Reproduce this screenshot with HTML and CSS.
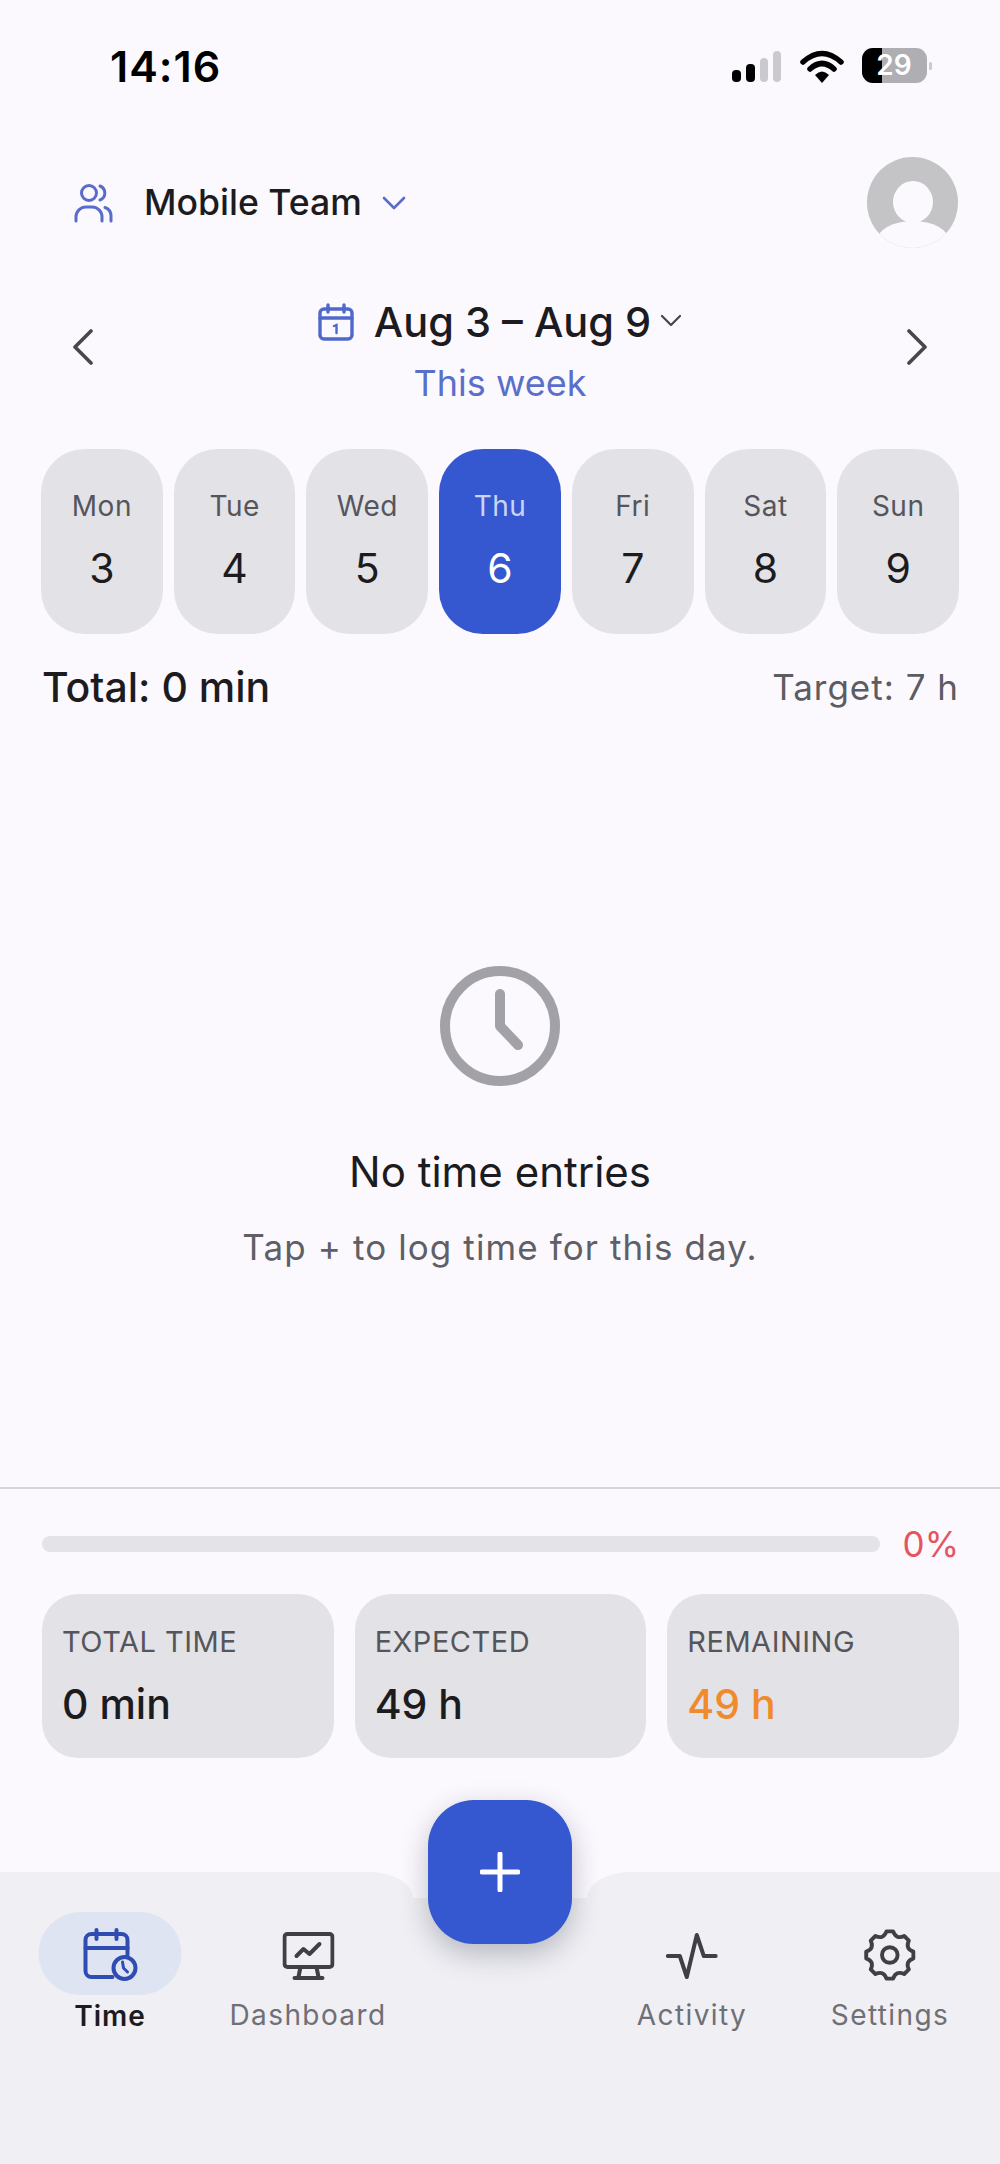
FILE: index.html
```html
<!DOCTYPE html>
<html lang="en">
<head>
    <meta charset="UTF-8">
    <meta name="viewport" content="width=device-width, initial-scale=1.0">
    <title>Time</title>
    <link rel="stylesheet" href="styles.css">
</head>
<body>
    <div class="page">
        <div class="status-bar">
            <span class="status-time">14:16</span>
            <svg class="status-icons" viewBox="0 0 200 36">
                <rect x="0" y="22" width="9" height="12" rx="4" fill="#000"/>
                <rect x="14" y="16" width="9" height="18" rx="4" fill="#000"/>
                <rect x="28" y="10" width="8" height="24" rx="4" fill="#c9c9ce"/>
                <rect x="41" y="3" width="8" height="31" rx="4" fill="#c9c9ce"/>
                <path d="M71 14 Q90 -3 109 14" fill="none" stroke="#000" stroke-width="5.5" stroke-linecap="round"/>
                <path d="M78 21 Q90 10 102 21" fill="none" stroke="#000" stroke-width="5.5" stroke-linecap="round"/>
                <path d="M83 27 Q90 20 97 27 L90 35 Z" fill="#000"/>
                <rect x="130" y="0" width="65" height="35" rx="11" fill="#aeaeb3"/>
                <path d="M141 0 H150 V35 H141 A11 11 0 0 1 130 24 V11 A11 11 0 0 1 141 0 Z" fill="#000"/>
                <rect x="197" y="14" width="3" height="8" rx="1.5" fill="#c9c9ce"/>
                <text x="162" y="27" class="battery-text">29</text>
            </svg>
        </div>

        <div class="team-row">
            <div class="team-select">
                <svg class="team-icon" viewBox="0 0 40 40" fill="none" stroke="#5a6ccb" stroke-width="3" stroke-linecap="round">
                    <circle cx="16" cy="10" r="7.5"/>
                    <path d="M27 3 A7.5 7.5 0 0 1 27 17"/>
                    <path d="M3 38 V34 A10 10 0 0 1 13 24 H19 A10 10 0 0 1 29 34 V38"/>
                    <path d="M32 24.500 A9 9 0 0 1 38 33 V38"/>
                </svg>
                <span class="team-name">Mobile Team</span>
                <svg class="team-chevron" viewBox="0 0 24 14" fill="none" stroke="#5a6ccb" stroke-width="2.600" stroke-linecap="round" stroke-linejoin="round">
                    <path d="M2 2 L12 12 L22 2"/>
                </svg>
            </div>
            <div class="avatar">
                <div class="avatar-head"></div>
                <div class="avatar-body"></div>
            </div>
        </div>

        <div class="date-row">
            <svg class="arrow" viewBox="0 0 22 36" fill="none" stroke="#46464c" stroke-width="3.600" stroke-linecap="round" stroke-linejoin="round">
                <path d="M19 2 L3 18 L19 34"/>
            </svg>
            <div class="date-center">
                <div class="date-line">
                    <svg class="date-icon" viewBox="0 0 36 38" fill="none" stroke="#5068cc" stroke-width="3.400" stroke-linecap="round">
                        <rect x="2" y="6" width="32" height="30" rx="4"/>
                        <path d="M2 15 H34"/>
                        <path d="M10 2 V9"/>
                        <path d="M26 2 V9"/>
                        <path d="M16 23 L18.500 22 V30" stroke-width="2.400"/>
                    </svg>
                    <span class="date-range">Aug 3 – Aug 9</span>
                    <svg class="date-chevron" viewBox="0 0 22 13" fill="none" stroke="#46464c" stroke-width="2.200" stroke-linecap="round" stroke-linejoin="round">
                        <path d="M2 2 L11 11 L20 2"/>
                    </svg>
                </div>
                <div class="date-sub">This week</div>
            </div>
            <svg class="arrow" viewBox="0 0 22 36" fill="none" stroke="#46464c" stroke-width="3.600" stroke-linecap="round" stroke-linejoin="round">
                <path d="M3 2 L19 18 L3 34"/>
            </svg>
        </div>

        <div class="week">
            <div class="day"><span class="day-name">Mon</span><span class="day-num">3</span></div>
            <div class="day"><span class="day-name">Tue</span><span class="day-num">4</span></div>
            <div class="day"><span class="day-name">Wed</span><span class="day-num">5</span></div>
            <div class="day active"><span class="day-name">Thu</span><span class="day-num">6</span></div>
            <div class="day"><span class="day-name">Fri</span><span class="day-num">7</span></div>
            <div class="day"><span class="day-name">Sat</span><span class="day-num">8</span></div>
            <div class="day"><span class="day-name">Sun</span><span class="day-num">9</span></div>
        </div>

        <div class="total-row">
            <span class="total">Total: 0 min</span>
            <span class="target">Target: 7 h</span>
        </div>

        <div class="empty">
            <svg class="empty-icon" viewBox="0 0 120 120" fill="none" stroke="#a2a1a7" stroke-width="10" stroke-linecap="round" stroke-linejoin="round">
                <circle cx="60" cy="60" r="55"/>
                <path d="M60 28 V60 L78 79"/>
            </svg>
            <div class="empty-title">No time entries</div>
            <div class="empty-sub">Tap + to log time for this day.</div>
        </div>

        <div class="summary">
            <div class="progress-row">
                <div class="progress"></div>
                <span class="progress-label">0%</span>
            </div>
            <div class="stats">
                <div class="stat">
                    <div class="stat-label">TOTAL TIME</div>
                    <div class="stat-value">0 min</div>
                </div>
                <div class="stat">
                    <div class="stat-label">EXPECTED</div>
                    <div class="stat-value">49 h</div>
                </div>
                <div class="stat">
                    <div class="stat-label">REMAINING</div>
                    <div class="stat-value orange">49 h</div>
                </div>
            </div>
        </div>

        <div class="nav">
            <div class="nav-side nav-left">
                <div class="nav-item nav-time">
                    <div class="nav-pill">
                        <svg class="nav-icon" viewBox="0 0 56 54" fill="none" stroke="#2f4cb2" stroke-width="4" stroke-linecap="round" stroke-linejoin="round">
                            <path d="M30 49 H9 A6 6 0 0 1 3 43 V12 A6 6 0 0 1 9 6 H39 A6 6 0 0 1 45 12 V27"/>
                            <path d="M3 20 H45"/>
                            <path d="M14 2 V11"/>
                            <path d="M34 2 V11"/>
                            <circle cx="42" cy="40" r="11"/>
                            <path d="M40 34 L41 40 L45 44" stroke-width="3"/>
                        </svg>
                    </div>
                    <span class="nav-label current">Time</span>
                </div>
                <div class="nav-item nav-dash">
                    <svg class="nav-icon" viewBox="0 0 52 48" fill="none" stroke="#3f3f45" stroke-width="4" stroke-linecap="round" stroke-linejoin="round">
                        <rect x="2" y="2" width="48" height="33" rx="3"/>
                        <path d="M14 24 L21 17 L27 22 L37 12"/>
                        <path d="M18 35 L16 45"/>
                        <path d="M34 35 L36 45"/>
                        <path d="M12 46 H40"/>
                    </svg>
                    <span class="nav-label">Dashboard</span>
                </div>
            </div>
            <div class="nav-gap"></div>
            <div class="nav-side nav-right">
                <div class="nav-item nav-activity">
                    <svg class="nav-icon" viewBox="0 0 52 48" fill="none" stroke="#3f3f45" stroke-width="4" stroke-linecap="round" stroke-linejoin="round">
                        <path d="M2 24 H14 L21 45 L31 3 L38 24 H50"/>
                    </svg>
                    <span class="nav-label">Activity</span>
                </div>
                <div class="nav-item nav-settings">
                    <svg class="nav-icon" viewBox="0 0 24 24" fill="none" stroke="#3f3f45" stroke-width="1.800" stroke-linejoin="round">
                        <path d="M10.470 1.110 H13.530 Q14.910 4.980 18.620 3.210 L20.790 5.380 Q19.020 9.090 22.890 10.470 V13.530 Q19.020 14.910 20.790 18.620 L18.620 20.790 Q14.910 19.020 13.530 22.890 H10.470 Q9.090 19.020 5.380 20.790 L3.210 18.620 Q4.980 14.910 1.110 13.530 V10.470 Q4.980 9.090 3.210 5.380 L5.380 3.210 Q9.090 4.980 10.470 1.110 Z"/>
                        <circle cx="12" cy="12" r="3.600"/>
                    </svg>
                    <span class="nav-label">Settings</span>
                </div>
            </div>
            <button class="fab">
                <svg class="fab-icon" viewBox="0 0 40 40" fill="none" stroke="#fff" stroke-width="5" stroke-linecap="round">
                    <path d="M20 2 V38"/>
                    <path d="M2 20 H38"/>
                </svg>
            </button>
        </div>
    </div>
</body>
</html>
```

FILE: styles.css
```css
* {
    box-sizing: border-box;
}

body {
    margin: 0;
    background-color: #fbf9fe;
    font-family: Inter, "Noto Sans", sans-serif;
    color: #1c1c20;
}

.page {
    display: flex;
    flex-direction: column;
    height: 2164px;
    overflow: hidden;
}

/* status bar */
.status-bar {
    display: flex;
    justify-content: space-between;
    align-items: flex-start;
    height: 86px;
    padding: 46px 68px 0 110px;
}

.status-time {
    font-size: 43px;
    line-height: 40px;
    font-weight: 600;
    letter-spacing: 1px;
    color: #000;
}

.status-icons {
    width: 200px;
    height: 36px;
    margin-top: 2px;
}

.battery-text {
    font-family: Inter, sans-serif;
    font-size: 28px;
    font-weight: 600;
    fill: #fff;
    text-anchor: middle;
}

/* team and avatar */
.team-row {
    display: flex;
    justify-content: space-between;
    align-items: center;
    margin-top: 71px;
    padding: 0 42px 0 73px;
}

.team-select {
    display: flex;
    align-items: center;
}

.team-icon {
    width: 40px;
    height: 40px;
}

.team-name {
    margin-left: 31px;
    font-size: 35.6px;
    font-weight: 500;
}

.team-chevron {
    width: 24px;
    height: 14px;
    margin-left: 20px;
}

.avatar {
    position: relative;
    width: 91px;
    height: 91px;
    border-radius: 50%;
    background-color: #c4c4c6;
    overflow: hidden;
}

.avatar-head {
    width: 40px;
    height: 42px;
    margin: 24px auto 0;
    border-radius: 50%;
    background-color: #fbf9fe;
}

.avatar-body {
    width: 72px;
    height: 40px;
    margin: -2px auto 0;
    border-radius: 50% 50% 0 0;
    background-color: #fbf9fe;
}

/* date picker */
.date-row {
    display: flex;
    justify-content: space-between;
    align-items: flex-start;
    margin-top: 48px;
    padding: 0 72px;
}

.arrow {
    width: 22px;
    height: 36px;
    margin-top: 33px;
}

.date-center {
    display: flex;
    flex-direction: column;
    align-items: center;
}

.date-line {
    display: flex;
    align-items: center;
    height: 52px;
}

.date-icon {
    width: 36px;
    height: 38px;
}

.date-range {
    margin-left: 20px;
    font-size: 41.5px;
    font-weight: 500;
}

.date-chevron {
    width: 22px;
    height: 13px;
    margin-left: 9px;
    margin-bottom: 4px;
}

.date-sub {
    margin-top: 10px;
    font-size: 36px;
    line-height: 50px;
    color: #5a6fca;
}

/* week strip */
.week {
    display: flex;
    gap: 11px;
    margin-top: 41px;
    padding: 0 41px;
}

.day {
    display: flex;
    flex: 1;
    flex-direction: column;
    align-items: center;
    height: 185px;
    padding-top: 37px;
    border-radius: 44px;
    background-color: #e2e2e7;
}

.day-name {
    font-size: 28px;
    line-height: 40px;
    letter-spacing: 0.5px;
    color: #55555c;
}

.day-num {
    margin-top: 22px;
    font-size: 41px;
    line-height: 40px;
    color: #1c1c20;
}

.day.active {
    background-color: #3558d0;
}

.day.active .day-name {
    color: #c9d4f7;
}

.day.active .day-num {
    color: #fff;
}

.total-row {
    display: flex;
    justify-content: space-between;
    align-items: center;
    height: 50px;
    margin-top: 28px;
    padding: 0 41px 0 42px;
}

.total {
    font-size: 41px;
    font-weight: 500;
}

.target {
    font-size: 35px;
    letter-spacing: 1px;
    color: #5c5c63;
}

/* empty state */
.empty {
    display: flex;
    flex: 1;
    flex-direction: column;
    align-items: center;
    padding-top: 254px;
}

.empty-icon {
    width: 120px;
    height: 120px;
}

.empty-title {
    margin-top: 61px;
    font-size: 42px;
    line-height: 50px;
}

.empty-sub {
    margin-top: 28px;
    font-size: 35px;
    line-height: 44px;
    letter-spacing: 1.1px;
    color: #5f5f66;
}

/* weekly summary */
.summary {
    padding: 33px 41px 114px 42px;
    border-top: 2px solid #d6d6da;
}

.progress-row {
    display: flex;
    align-items: center;
    gap: 23px;
    height: 44px;
}

.progress {
    flex: 1;
    height: 16px;
    border-radius: 8px;
    background-color: #e3e3e8;
}

.progress-label {
    font-size: 35px;
    color: #e5555f;
}

.stats {
    display: grid;
    grid-template-columns: repeat(3, 1fr);
    gap: 21px;
    margin-top: 28px;
}

.stat {
    height: 164px;
    padding: 30px 20px 0;
    border-radius: 36px;
    background-color: #e2e2e7;
}

.stat-label {
    font-size: 29px;
    line-height: 36px;
    letter-spacing: 0.5px;
    color: #55555c;
}

.stat-value {
    margin-top: 19px;
    font-size: 41px;
    line-height: 50px;
    font-weight: 500;
}

.orange {
    color: #f08a2a;
}

/* bottom navigation */
.nav {
    position: relative;
    display: flex;
    height: 292px;
}

.nav-side {
    display: flex;
    width: 413px;
    background-color: #efeff4;
}

.nav-left {
    border-top-right-radius: 44px 26px;
}

.nav-right {
    border-top-left-radius: 44px 26px;
}

.nav-gap {
    flex: 1;
    background: linear-gradient(#fbf9fe 0, #fbf9fe 26px, #efeff4 26px);
}

.nav-item {
    display: flex;
    flex-direction: column;
    align-items: center;
    position: absolute;
    top: 60px;
    transform: translateX(-50%);
}

.nav-time {
    left: 110px;
    top: 40px;
}

.nav-dash {
    left: 308px;
}

.nav-activity {
    left: 692px;
}

.nav-settings {
    left: 890px;
}

.nav-pill {
    display: flex;
    justify-content: center;
    align-items: center;
    width: 143px;
    height: 83px;
    border-radius: 42px;
    background-color: #dfe4f3;
}

.nav-icon {
    width: 52px;
    height: 48px;
}

.nav-pill .nav-icon {
    width: 56px;
    height: 54px;
    margin-top: 2px;
}

.nav-settings .nav-icon {
    width: 52px;
    height: 52px;
    margin: -3px 0 -1px;
}

.nav-label {
    margin-top: 17px;
    font-size: 28px;
    line-height: 36px;
    letter-spacing: 1.4px;
    color: #6f6f76;
}

.nav-label.current {
    margin-top: 3px;
    font-weight: 600;
    letter-spacing: 1px;
    color: #1c1c20;
}

.fab {
    position: absolute;
    top: -72px;
    left: 428px;
    display: flex;
    justify-content: center;
    align-items: center;
    width: 144px;
    height: 144px;
    padding: 0;
    border: none;
    border-radius: 46px;
    background-color: #3558d0;
    box-shadow: 0 10px 28px rgba(40, 40, 60, 0.28);
}

.fab-icon {
    width: 40px;
    height: 40px;
}
```
